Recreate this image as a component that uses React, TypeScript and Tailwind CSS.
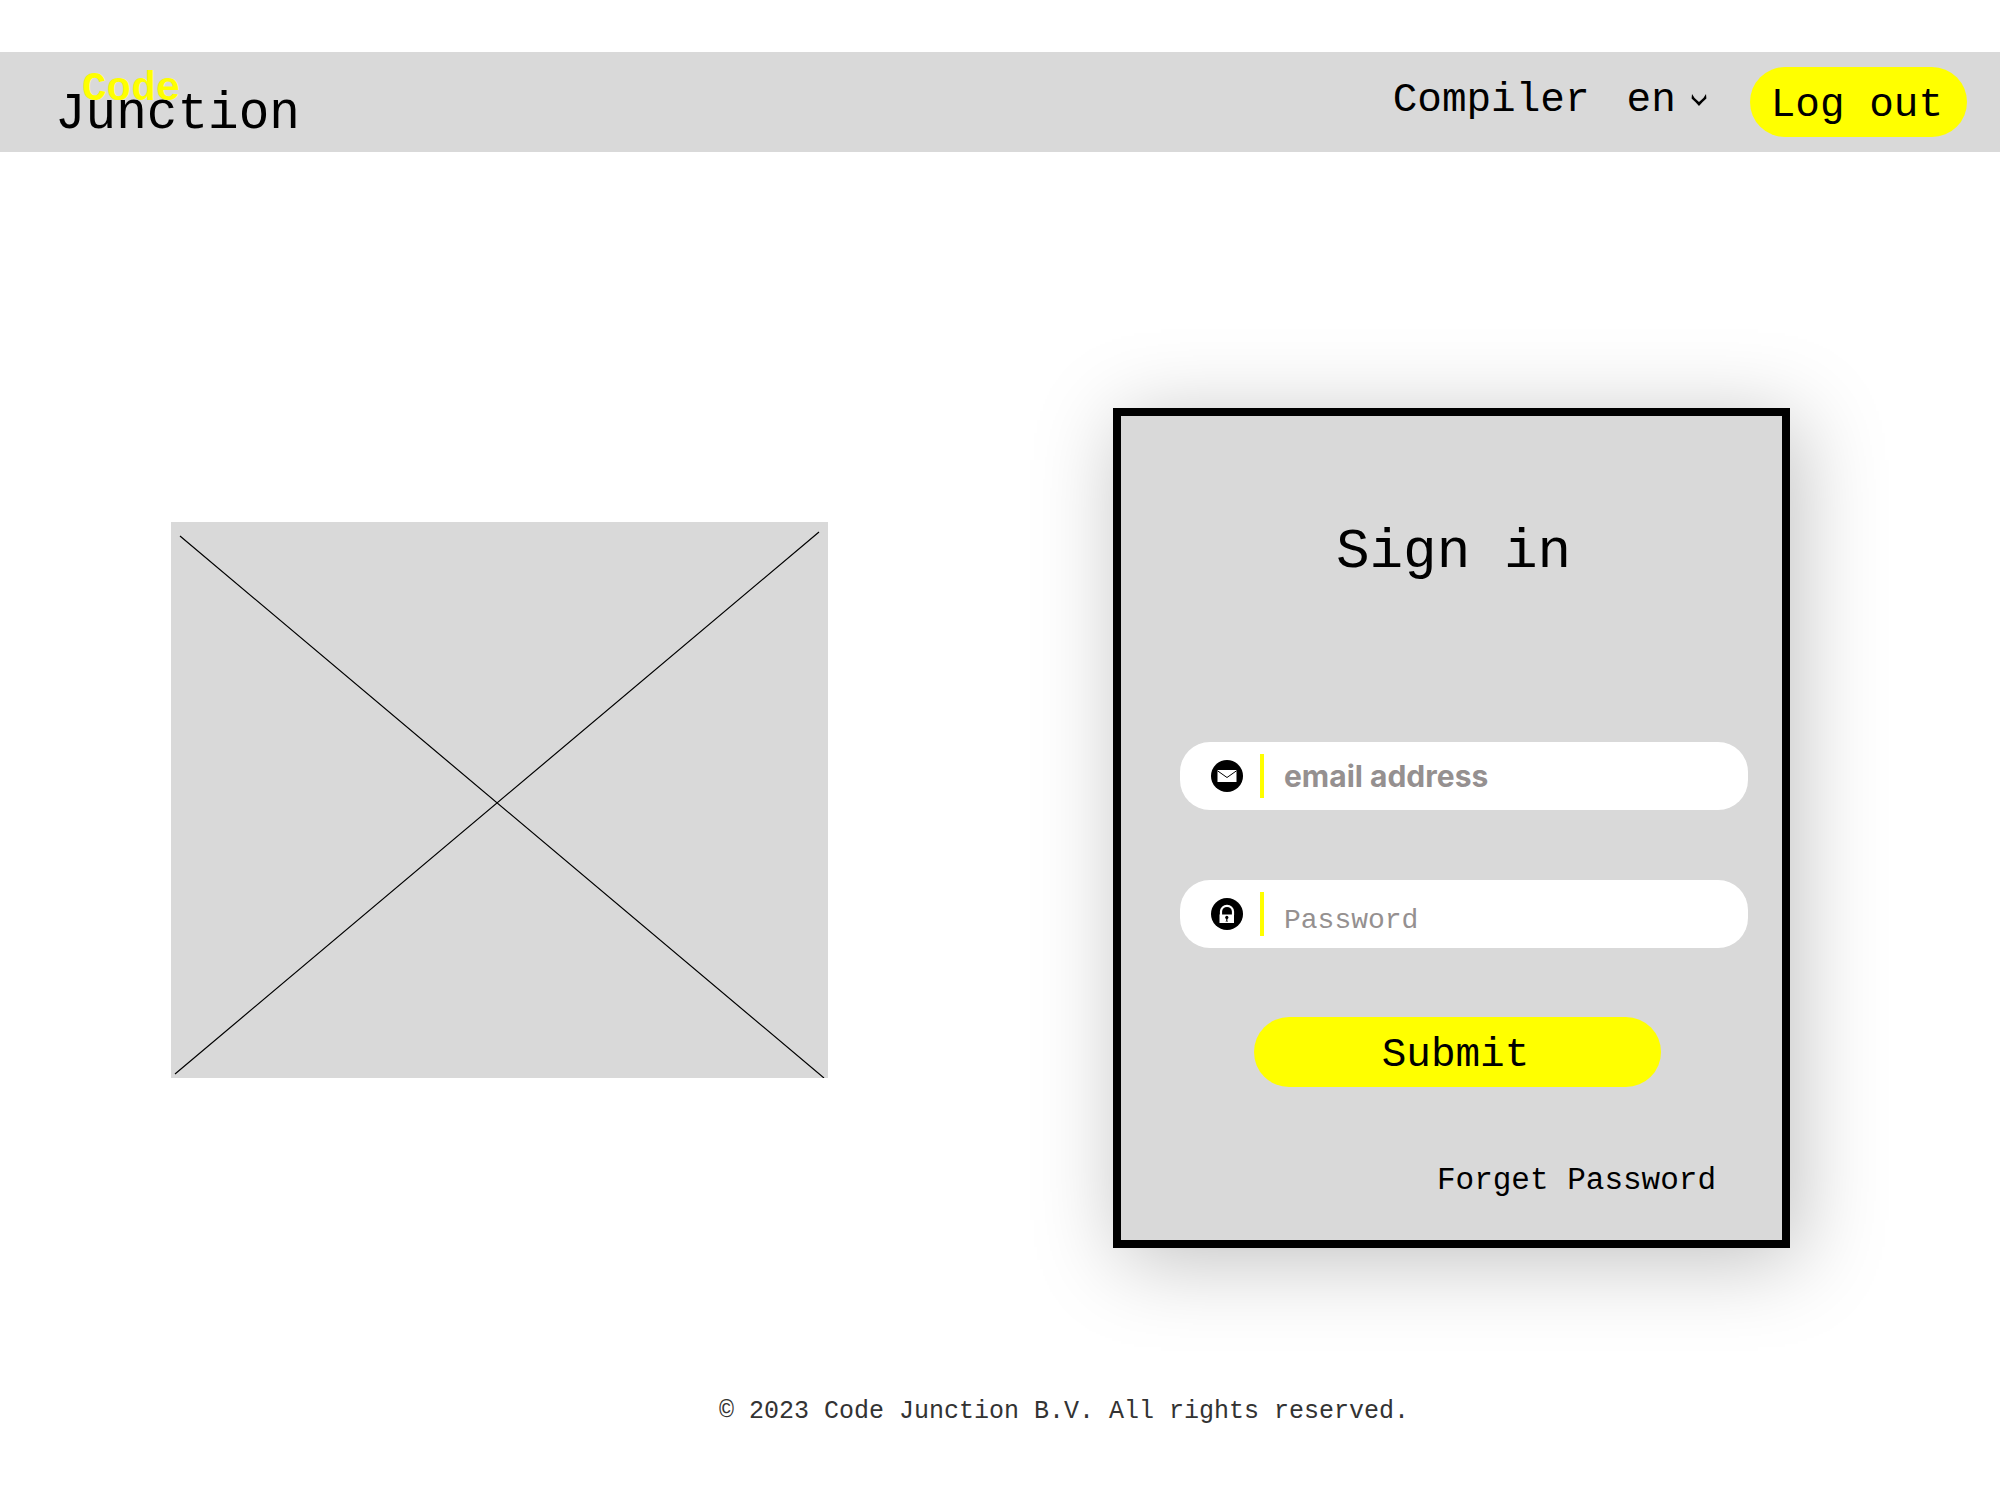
import React from "react";

function Header() {
  return (
    <header className="mt-[52px] flex h-[100px] items-center justify-between bg-[#d9d9d9] pl-[55px] pr-[33px]">
      <a href="#" className="relative block pt-[26px] text-[51px] leading-[60px] text-black">
        Junction
        <span className="absolute left-[27px] top-[10px] text-[41px] font-bold leading-[40px] text-[#ffff00]">
          Code
        </span>
      </a>
      <nav className="flex items-center text-[41px] leading-[48px]">
        <a href="#" className="mb-1">
          Compiler
        </a>
        <button type="button" className="mb-1 ml-[37px] flex items-center gap-[15px]">
          en
          <svg width="16" height="12" viewBox="0 0 16 12" aria-hidden="true">
            <path d="M1 0 Q3 4.5 8 8 Q13 4.5 15 0 L15.4 4.6 Q11.5 8 8 12 Q4.5 8 0.6 4.6 Z" fill="#000" />
          </svg>
        </button>
        <button
          type="button"
          className="ml-[43px] h-[70px] rounded-full bg-[#ffff00] pl-[21px] pr-[24px] pt-[6px]"
        >
          Log out
        </button>
      </nav>
    </header>
  );
}

function ImagePlaceholder() {
  return (
    <div className="mt-[114px] h-[556px] w-[657px] bg-[#d9d9d9]">
      <svg viewBox="0 0 657 556" className="h-full w-full" role="img" aria-label="Placeholder">
        <path d="M9 14 L653 556 M648 10 L4 552" stroke="#000" strokeWidth="1.2" />
      </svg>
    </div>
  );
}

function MailIcon() {
  return (
    <svg width="32" height="32" viewBox="0 0 32 32" aria-hidden="true">
      <circle cx="16" cy="16" r="16" fill="#000" />
      <rect x="6.5" y="10" width="19" height="12" fill="#fff" />
      <path d="M6.5 10.8 L16 17.5 L25.5 10.8" fill="none" stroke="#000" strokeWidth="1" />
    </svg>
  );
}

function LockIcon() {
  return (
    <svg width="32" height="32" viewBox="0 0 32 32" aria-hidden="true">
      <circle cx="16" cy="16" r="16" fill="#000" />
      <path d="M10 17 V13.5 A6 5.7 0 0 1 22 13.5 V17" fill="none" stroke="#fff" strokeWidth="2.2" />
      <rect x="8.5" y="16.5" width="14.5" height="8.5" fill="#fff" />
      <circle cx="15.8" cy="19.4" r="1.6" fill="#000" />
      <path d="M15.2 20 H16.4 V23 H17 V23.6 H14.6 V23 H15.2 Z" fill="#000" />
    </svg>
  );
}

function Field({
  id,
  label,
  type,
  icon,
  inputClass,
}: {
  id: string;
  label: string;
  type: string;
  icon: React.ReactNode;
  inputClass: string;
}) {
  return (
    <div className="flex h-[68px] items-center rounded-[30px] bg-white pl-[31px] pr-6">
      <label htmlFor={id} aria-label={label}>
        {icon}
      </label>
      <span className="ml-[17px] h-11 w-1 bg-[#ffff00]" />
      <input
        id={id}
        type={type}
        placeholder={label}
        className={"ml-5 h-full min-w-0 flex-1 bg-transparent outline-none placeholder:text-[#959090] placeholder:opacity-100 " + inputClass}
      />
    </div>
  );
}

function SignInCard() {
  return (
    <form className="flex w-[677px] flex-col border-8 border-black bg-[#d9d9d9] pb-[39px] pl-[59px] pr-[34px] shadow-[8px_12px_80px_rgba(0,0,0,0.25)]">
      <h1 className="mt-[104px] pr-[21px] text-center text-[56px] leading-[64px]">Sign in</h1>
      <div className="mt-[158px] flex flex-col gap-[70px]">
        <Field
          id="email"
          label="email address"
          type="email"
          icon={<MailIcon />}
          inputClass="font-['Inter',sans-serif] text-[30px] font-bold"
        />
        <Field
          id="password"
          label="Password"
          type="password"
          icon={<LockIcon />}
          inputClass="pt-3 text-[28px]"
        />
      </div>
      <button
        type="submit"
        className="ml-[74px] mr-[87px] mt-[69px] h-[70px] rounded-full bg-[#ffff00] pr-1 pt-[6px] text-[41px] leading-[48px]"
      >
        Submit
      </button>
      <a href="#" className="mr-[32px] mt-[74px] self-end text-[31px] leading-[40px]">
        Forget Password
      </a>
    </form>
  );
}

export default function App() {
  return (
    <div className="flow-root min-h-screen bg-white font-['Liberation_Mono',monospace] text-black">
      <Header />
      <main className="mt-[256px] flex items-start justify-between pl-[171px] pr-[210px]">
        <ImagePlaceholder />
        <SignInCard />
      </main>
      <footer className="mt-[148px] pb-16 pl-[128px] text-center text-[25px] leading-[32px] text-[#333333]">
        © 2023 Code Junction B.V. All rights reserved.
      </footer>
    </div>
  );
}
